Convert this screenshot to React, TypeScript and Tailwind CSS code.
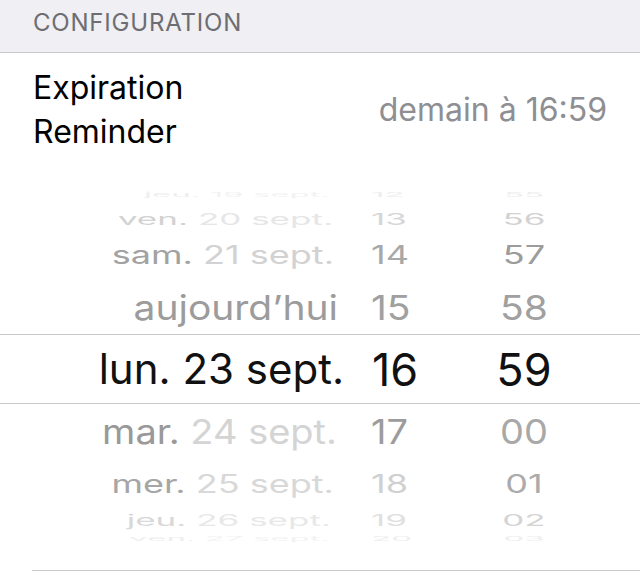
import React from 'react';

type Row = {
  day: string;
  date: string;
  hour: string;
  minute: string;
  h: string;
  size: string;
  sy: string;
  edge: string;
  clip: boolean;
  dayColor: string;
  dateColor: string;
  hourColor: string;
  minColor: string;
};

const rows: Row[] = [
  { day: 'jeu.', date: '19 sept.', hour: '12', minute: '55', h: 'h-[14px]', size: 'text-[33px] leading-[14px]', sy: 'scale-y-[0.18]', edge: 'pr-[10px]', clip: false, dayColor: 'text-[#eeeeee]', dateColor: 'text-[#f2f2f2]', hourColor: 'text-[#eeeeee]', minColor: 'text-[#eeeeee]' },
  { day: 'ven.', date: '20 sept.', hour: '13', minute: '56', h: 'h-[28px]', size: 'text-[35px] leading-none', sy: 'scale-y-[0.45]', edge: 'pr-[7px]', clip: true, dayColor: 'text-[#d2d2d2]', dateColor: 'text-[#e6e6e6]', hourColor: 'text-[#d6d6d6]', minColor: 'text-[#d2d2d2]' },
  { day: 'sam.', date: '21 sept.', hour: '14', minute: '57', h: 'h-[50px]', size: 'text-[36px] leading-none', sy: 'scale-y-[0.7]', edge: 'pr-[6px]', clip: true, dayColor: 'text-[#a2a2a2]', dateColor: 'text-[#d2d2d2]', hourColor: 'text-[#a8a8a8]', minColor: 'text-[#9c9c9c]' },
  { day: '', date: 'aujourd\u2019hui', hour: '15', minute: '58', h: 'h-[54px]', size: 'text-[39px] leading-none', sy: 'scale-y-[0.88]', edge: 'pr-[2px]', clip: true, dayColor: 'text-[#9c9c9c]', dateColor: 'text-[#9c9c9c]', hourColor: 'text-[#a0a0a0]', minColor: 'text-[#a0a0a0]' },
];

const below: Row[] = [
  { day: 'mar.', date: '24 sept.', hour: '17', minute: '00', h: 'h-[55px]', size: 'text-[38px] leading-none', sy: 'scale-y-[0.88]', edge: 'pr-[3px]', clip: true, dayColor: 'text-[#999999]', dateColor: 'text-[#d4d4d4]', hourColor: 'text-[#9c9c9c]', minColor: 'text-[#a8a8a8]' },
  { day: 'mer.', date: '25 sept.', hour: '18', minute: '01', h: 'h-[50px]', size: 'text-[36px] leading-none', sy: 'scale-y-[0.7]', edge: 'pr-[6px]', clip: true, dayColor: 'text-[#a6a6a6]', dateColor: 'text-[#d8d8d8]', hourColor: 'text-[#d0d0d0]', minColor: 'text-[#ababab]' },
  { day: 'jeu.', date: '26 sept.', hour: '19', minute: '02', h: 'h-[22px]', size: 'text-[35px] leading-[22px]', sy: 'scale-y-[0.45]', edge: 'pr-[9px]', clip: false, dayColor: 'text-[#d8d8d8]', dateColor: 'text-[#e8e8e8]', hourColor: 'text-[#e0e0e0]', minColor: 'text-[#d4d4d4]' },
  { day: 'ven.', date: '27 sept.', hour: '20', minute: '03', h: 'h-[15px]', size: 'text-[33px] leading-[15px]', sy: 'scale-y-[0.18]', edge: 'pr-[10px]', clip: false, dayColor: 'text-[#eeeeee]', dateColor: 'text-[#f2f2f2]', hourColor: 'text-[#eeeeee]', minColor: 'text-[#eeeeee]' },
];

function WheelRow({ row }: { row: Row }) {
  return (
    <div className={`${row.h} grid grid-cols-[340px_118px_132px] items-center ${row.clip ? 'overflow-hidden' : ''}`}>
      <div className={`${row.size} ${row.sy} ${row.edge} text-right whitespace-nowrap`}>
        {row.day && <span className={row.dayColor}>{row.day} </span>}
        <span className={row.dateColor}>{row.date}</span>
      </div>
      <div className={`${row.size} ${row.sy} ${row.hourColor} pl-[31px]`}>{row.hour}</div>
      <div className={`${row.size} ${row.sy} ${row.minColor} text-center`}>{row.minute}</div>
    </div>
  );
}

export default function App() {
  return (
    <div className="w-[640px] h-[582px] bg-white overflow-hidden" style={{ fontFamily: 'Inter, "Noto Sans", sans-serif' }}>
      <div className="h-[53px] bg-[#efeff4] border-b border-[#c8c7cc] flex items-center px-[33px] pb-[7px]">
        <span className="text-[24px] text-[#6d6d72] tracking-[0.8px]">CONFIGURATION</span>
      </div>

      <div className="h-[114px] flex items-center justify-between px-[33px]">
        <div className="text-[32px] leading-[44px] text-black">
          Expiration
          <br />
          Reminder
        </div>
        <div className="text-[32px] text-[#8e8e93]">demain à 16:59</div>
      </div>

      <div className="pt-[21px]">
        {rows.map((r, i) => (
          <WheelRow key={i} row={r} />
        ))}
        <div className="h-[70px] border-y border-[#c8c7cc] grid grid-cols-[344px_112px_136px] items-center">
          <div className="text-[42px] text-right text-[#111] leading-none whitespace-nowrap">lun. 23 sept.</div>
          <div className="text-[45px] text-[#111] pl-[28px] leading-none">16</div>
          <div className="text-[45px] text-[#111] text-center leading-none">59</div>
        </div>
        {below.map((r, i) => (
          <WheelRow key={i} row={r} />
        ))}
        <div className="h-[24px]" />
        <div className="ml-[32px] border-t border-[#c8c7cc]" />
      </div>
    </div>
  );
}
